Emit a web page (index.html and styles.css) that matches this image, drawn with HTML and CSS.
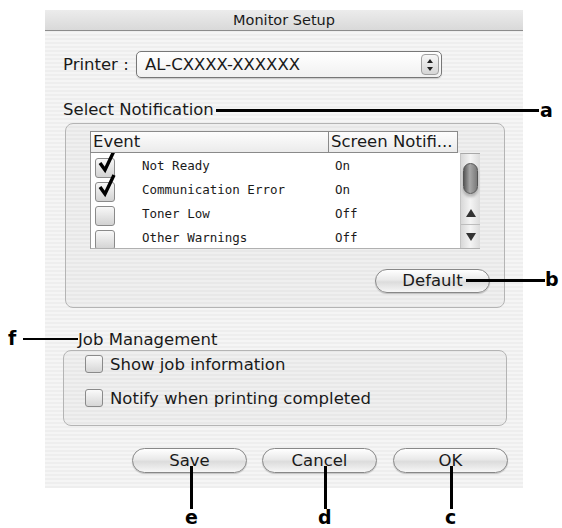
FILE: index.html
```html
<!DOCTYPE html>
<html lang="en">

<head>
  <meta charset="UTF-8">
  <title>Monitor Setup</title>
  <link rel="stylesheet" href="styles.css">
</head>

<body>
  <div class="window">
    <div class="titlebar">Monitor Setup</div>

    <div class="printer-row">
      <span class="printer-label">Printer :</span>
      <div class="popup">
        <span class="popup-value">AL-CXXXX-XXXXXX</span>
        <span class="stepper">
          <svg width="8" height="14" viewBox="0 0 8 14"><path d="M4 1 L7 5 L1 5 Z M4 13 L7 9 L1 9 Z" fill="#222"/></svg>
        </span>
      </div>
    </div>

    <div class="section-label">Select Notification</div>
    <div class="group group-notify">
      <div class="table">
        <div class="table-head">
          <div class="th th-event">Event</div>
          <div class="th th-screen">Screen Notifi...</div>
        </div>
        <div class="table-body">
          <div class="rows">
            <div class="row">
              <div class="cell-event"><span class="tick checked"><svg width="22" height="26" viewBox="0 0 22 26"><path d="M4 14 L9 21 L18 2" fill="none" stroke="#000" stroke-width="3.4" stroke-linejoin="miter"/></svg></span><span>Not Ready</span></div>
              <div class="cell-state">On</div>
            </div>
            <div class="row">
              <div class="cell-event"><span class="tick checked"><svg width="22" height="26" viewBox="0 0 22 26"><path d="M4 14 L9 21 L18 2" fill="none" stroke="#000" stroke-width="3.4" stroke-linejoin="miter"/></svg></span><span>Communication Error</span></div>
              <div class="cell-state">On</div>
            </div>
            <div class="row">
              <div class="cell-event"><span class="tick"></span><span>Toner Low</span></div>
              <div class="cell-state">Off</div>
            </div>
            <div class="row">
              <div class="cell-event"><span class="tick"></span><span>Other Warnings</span></div>
              <div class="cell-state">Off</div>
            </div>
          </div>
          <div class="scrollbar">
            <div class="thumb"></div>
            <div class="arrow arrow-up"><svg width="10" height="8" viewBox="0 0 10 8"><path d="M5 0 L10 8 L0 8 Z" fill="#333"/></svg></div>
            <div class="arrow"><svg width="10" height="8" viewBox="0 0 10 8"><path d="M0 0 L10 0 L5 8 Z" fill="#333"/></svg></div>
          </div>
        </div>
      </div>
      <div class="group-actions">
        <button class="btn btn-default">Default</button>
      </div>
    </div>

    <div class="section-label section-job">Job Management</div>
    <div class="group group-job">
      <label class="check-row"><span class="box"></span>Show job information</label>
      <label class="check-row"><span class="box"></span>Notify when printing completed</label>
    </div>

    <div class="buttons">
      <button class="btn">Save</button>
      <button class="btn btn-cancel">Cancel</button>
      <button class="btn btn-ok">OK</button>
    </div>
  </div>

  <!-- callouts drawn over the dialog -->
  <div class="callout line-a"></div>
  <div class="callout-letter letter-a">a</div>
  <div class="callout line-b"></div>
  <div class="callout-letter letter-b">b</div>
  <div class="callout-letter letter-f">f</div>
  <div class="callout line-f"></div>
  <div class="callout vline vline-e"></div>
  <div class="callout-letter letter-e">e</div>
  <div class="callout vline vline-d"></div>
  <div class="callout-letter letter-d">d</div>
  <div class="callout vline vline-c"></div>
  <div class="callout-letter letter-c">c</div>
</body>

</html>
```

FILE: styles.css
```css
* {
  box-sizing: border-box;
}

body {
  margin: 0;
  width: 562px;
  height: 528px;
  overflow: hidden;
  position: relative;
  background: #fff;
  font-family: "DejaVu Sans", sans-serif;
  font-size: 16.5px;
  color: #1a1a1a;
}

.window {
  margin: 10px 0 0 45px;
  width: 478px;
  height: 478px;
  background: repeating-linear-gradient(#eeeeee 0 2px, #f5f5f5 2px 4px);
}

.titlebar {
  height: 21px;
  line-height: 20px;
  text-align: center;
  font-size: 14.5px;
  background: linear-gradient(#ececec, #d9d9d9);
  border-bottom: 1px solid #8c8c8c;
}

/* Printer popup */
.printer-row {
  display: flex;
  align-items: center;
  margin: 20px 0 0 18px;
  height: 27px;
}

.printer-label {
  width: 73px;
}

.popup {
  display: flex;
  align-items: center;
  width: 306px;
  height: 27px;
  padding-left: 8px;
  border: 1px solid #777;
  border-radius: 5px;
  background: linear-gradient(#ffffff, #f1f1f1);
  box-shadow: 0 1px 1px rgba(0, 0, 0, 0.15);
}

.stepper {
  display: flex;
  align-items: center;
  justify-content: center;
  margin-left: auto;
  margin-right: 2px;
  width: 18px;
  height: 21px;
  border: 1px solid #a0a0a0;
  border-radius: 4px;
  background: linear-gradient(#f7f7f7, #d6d6d6);
}

.section-label {
  margin: 22px 0 0 18px;
  height: 20px;
  line-height: 20px;
}

/* Group boxes */
.group {
  border: 1px solid #b4b4b4;
  border-radius: 8px;
  background: rgba(0, 0, 0, 0.025);
}

.group-notify {
  margin: 3px 0 0 20px;
  width: 440px;
  height: 185px;
  padding: 7px 0 0 24px;
}

.table {
  width: 390px;
}

.table-head {
  display: flex;
  width: 368px;
  height: 22px;
}

.th {
  line-height: 20px;
  padding-left: 2px;
  border-top: 1px solid #8a8a8a;
  border-bottom: 1px solid #8a8a8a;
  border-left: 1px solid #8a8a8a;
  background: linear-gradient(#fdfdfd, #ebebeb);
}

.th-event {
  width: 238px;
}

.th-screen {
  width: 130px;
  border-right: 1px solid #8a8a8a;
}

.table-body {
  display: flex;
  height: 96px;
  border-left: 1px solid #9a9a9a;
  border-bottom: 1px solid #b0b0b0;
}

.rows {
  width: 369px;
  background: #fff;
  overflow: hidden;
  font-family: "DejaVu Sans Mono", monospace;
  font-size: 12.5px;
}

.row {
  display: flex;
  height: 24px;
  align-items: center;
}

.cell-event {
  display: flex;
  align-items: center;
  width: 237px;
  padding-left: 4px;
}

.cell-event span:last-child {
  margin-left: 27px;
}

.cell-state {
  padding-left: 7px;
}

.tick {
  position: relative;
  width: 20px;
  height: 20px;
  margin-top: 6px;
  border: 1px solid #8a8a8a;
  border-radius: 3px;
  background: linear-gradient(#f8f8f8, #d2d2d2);
}

.tick svg {
  position: absolute;
  left: 0;
  top: -10px;
}

.scrollbar {
  width: 20px;
  display: flex;
  flex-direction: column;
  border-top: 1px solid #a8a8a8;
  border-left: 1px solid #c4c4c4;
  background: linear-gradient(90deg, #d8d8d8, #f4f4f4 50%, #dcdcdc);
}

.thumb {
  margin: 9px auto 0;
  width: 15px;
  height: 31px;
  border-radius: 8px;
  border: 1px solid #555;
  background: linear-gradient(90deg, #5a5a5a, #a8a8a8 45%, #7a7a7a);
  box-shadow: 0 3px 3px rgba(0, 0, 0, 0.25);
}

.arrow {
  display: flex;
  align-items: center;
  justify-content: center;
  height: 23px;
}

.arrow-up {
  margin-top: auto;
  border-bottom: 1px solid #bdbdbd;
}

.group-actions {
  display: flex;
  justify-content: flex-end;
  margin: 20px 14px 0 0;
}

/* Aqua buttons */
.btn {
  width: 115px;
  height: 25px;
  padding: 0;
  font-family: "DejaVu Sans", sans-serif;
  font-size: 16.5px;
  line-height: 22px;
  color: #1a1a1a;
  border: 1px solid #888;
  border-radius: 13px;
  background: linear-gradient(#ffffff, #e9e9e9 45%, #dcdcdc 55%, #f6f6f6);
  box-shadow: 0 1px 1px rgba(0, 0, 0, 0.2);
}

.btn-default {
  width: 115px;
  height: 24px;
}

.section-job {
  margin-left: 33px;
}

.group-job {
  margin: 0 0 0 18px;
  width: 444px;
  height: 76px;
  padding: 1px 0 0 21px;
}

.check-row {
  display: flex;
  align-items: center;
  height: 24px;
  margin-bottom: 10px;
}

.box {
  width: 18px;
  height: 18px;
  margin-right: 7px;
  border: 1px solid #8a8a8a;
  border-radius: 3px;
  background: linear-gradient(#fafafa, #d6d6d6);
}

.buttons {
  display: flex;
  gap: 15px;
  margin: 22px 0 0 87px;
}

.btn-ok {
  margin-left: 1px;
}

/* Callout marks */
.callout {
  position: absolute;
  background: #000;
}

.callout-letter {
  position: absolute;
  font-family: "DejaVu Sans", sans-serif;
  font-weight: bold;
  font-size: 19px;
  line-height: 20px;
  color: #000;
}

.line-a {
  left: 216px;
  top: 109px;
  width: 323px;
  height: 3px;
}

.letter-a {
  left: 540px;
  top: 100px;
}

.line-b {
  left: 466px;
  top: 279px;
  width: 79px;
  height: 3px;
}

.letter-b {
  left: 545px;
  top: 269px;
}

.letter-f {
  left: 8px;
  top: 328px;
}

.line-f {
  left: 23px;
  top: 338px;
  width: 55px;
  height: 2px;
}

.vline {
  top: 466px;
  width: 3px;
  height: 43px;
}

.vline-e {
  left: 190px;
}

.letter-e {
  left: 185px;
  top: 507px;
}

.vline-d {
  left: 324px;
}

.letter-d {
  left: 318px;
  top: 507px;
}

.vline-c {
  left: 450px;
}

.letter-c {
  left: 445px;
  top: 507px;
}
```
